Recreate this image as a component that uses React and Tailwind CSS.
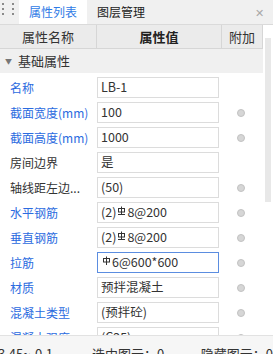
import React from 'react';

// 属性行数据
const rows = [
    { label: '名称', value: 'LB-1', blue: true, dot: false },
    { label: '截面宽度(mm)', value: '100', blue: true, dot: true },
    { label: '截面高度(mm)', value: '1000', blue: true, dot: true },
    { label: '房间边界', value: '是', blue: false, dot: false },
    { label: '轴线距左边...', value: '(50)', blue: false, dot: true },
    { label: '水平钢筋', value: '(2)|8@200', bar: 'hrb', blue: true, dot: true },
    { label: '垂直钢筋', value: '(2)|8@200', bar: 'hrb', blue: true, dot: true },
    { label: '拉筋', value: '|6@600*600', bar: 'hpb', blue: true, dot: true, focus: true },
    { label: '材质', value: '预拌混凝土', blue: true, dot: true },
    { label: '混凝土类型', value: '(预拌砼)', blue: true, dot: true },
    { label: '混凝土强度', value: '(C25)', blue: true, dot: true },
];

// 钢筋等级符号
function BarSymbol({ type }) {
    return (
        <svg width="9" height="10" viewBox="0 0 9 10" className="inline-block self-start mt-[3px] mx-[1px]">
            <line x1="4.5" y1="0.5" x2="4.5" y2={type === 'hrb' ? 8 : 9} stroke="#333" strokeWidth="1" />
            <rect x="1.5" y="2.5" width="6" height="3.5" fill="none" stroke="#333" strokeWidth="1" />
            {type === 'hrb' && <line x1="1" y1="8.5" x2="8" y2="8.5" stroke="#333" strokeWidth="1" />}
        </svg>
    );
}

function Value({ row }) {
    if (!row.bar) return <span>{row.value}</span>;
    const [before, after] = row.value.split('|');
    return (
        <span className="flex">
            <span>{before}</span>
            <BarSymbol type={row.bar} />
            <span>{after}</span>
        </span>
    );
}

export default function App() {
    return (
        <div
            className="w-[273px] h-[354px] overflow-hidden bg-white flex flex-col text-[12.5px] text-[#333]"
            style={{ fontFamily: '"Noto Sans CJK SC", "Liberation Sans", sans-serif' }}
        >
            {/* 标签栏 */}
            <div className="h-[25px] shrink-0 flex items-stretch bg-[#f0f0f0] border-b border-[#dadada]">
                <div className="w-[19px] grid grid-cols-2 gap-x-[2px] gap-y-[3px] content-start pt-[3px] pl-[2px]">
                    {[0, 1, 2, 3, 4, 5].map(i => (
                        <span key={i} className="w-[2px] h-[2px] bg-[#8a8a8a]" />
                    ))}
                </div>
                <div className="w-[68px] bg-white flex items-center justify-center text-[12px] text-[#2f7be6]">属性列表</div>
                <div className="pl-[10px] flex items-center text-[12px] text-[#222]">图层管理</div>
                <div className="ml-auto mr-[9px] flex items-center text-[#a8a8a8] text-[11px] leading-none">✕</div>
            </div>

            {/* 属性表 */}
            <div className="relative h-[310px] shrink-0 overflow-hidden">
                <div className="w-[263px]">
                    <div className="h-[24px] flex bg-[#ebebeb] border-b border-[#d6d6d6] text-[13px]">
                        <div className="w-[97px] border-r border-[#d6d6d6] flex items-center justify-center">属性名称</div>
                        <div className="w-[125px] border-r border-[#d6d6d6] flex items-center justify-center font-bold text-[#222]">属性值</div>
                        <div className="w-[41px] border-r border-[#d6d6d6] flex items-center justify-center">附加</div>
                    </div>
                    <div className="h-[24px] flex items-center bg-[#f0f0f0] text-[13px]">
                        <span className="ml-[5px] mr-[6px] text-[7px] text-[#777]">▼</span>
                        <span>基础属性</span>
                    </div>
                    {rows.map(row => (
                        <div key={row.label} className="h-[25px] pt-[4px] flex text-[12px]">
                            <div className={`w-[97px] pl-[10px] flex items-center whitespace-nowrap ${row.blue ? 'text-[#2b6be0]' : 'text-[#333]'}`}>
                                {row.label}
                            </div>
                            <div
                                className={`w-[122px] h-[21px] pl-[3px] flex items-center border bg-white whitespace-nowrap overflow-hidden text-[12.5px] ${
                                    row.focus ? 'border-[#5b8de0]' : 'border-[#dcdcdc]'
                                }`}
                            >
                                <Value row={row} />
                            </div>
                            <div className="w-[43px] flex items-center justify-center">
                                {row.dot && <span className="w-[8px] h-[8px] rounded-full bg-[#d6d6d6] border border-[#c2c2c2]" />}
                            </div>
                        </div>
                    ))}
                </div>
                {/* 滚动条 */}
                <div className="absolute left-[265px] top-[13px] w-[6px] h-[164px] bg-[#e8e8e8]" />
            </div>

            {/* 状态栏 */}
            <div className="h-[30px] shrink-0 flex items-start pt-[8px] bg-[#f6f6f6] border-t border-[#e2e2e2] whitespace-nowrap text-[13px]">
                <span className="-ml-[2px] w-[95px]">3.45~-0.1</span>
                <span className="w-[110px]">选中图元：0</span>
                <span>隐藏图元：0</span>
            </div>
        </div>
    );
}
